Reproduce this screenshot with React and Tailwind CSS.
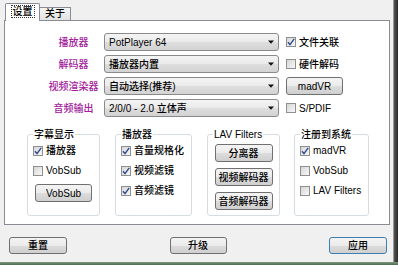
import React from 'react';

// Win7 style "PotPlayer" settings dialog

const FONT = "font-['Liberation_Sans','Noto_Sans_CJK_SC',sans-serif]";

function Check({ checked }) {
  return (
    <span className="w-[10px] h-[10px] shrink-0 border border-[#8f8f8f] bg-[linear-gradient(135deg,#d6d6d6,#f8f8f8)] flex items-center justify-center">
      {checked && (
        <svg width="8" height="8" viewBox="0 0 8 8">
          <path d="M1 4.2 L3 6.6 L7.2 0.8" fill="none" stroke="#2d4a8f" strokeWidth="1.4" />
        </svg>
      )}
    </span>
  );
}

function CheckRow({ checked, children }) {
  return (
    <div className="flex items-center gap-[3px] h-[13px] leading-[13px]">
      <Check checked={checked} />
      <span>{children}</span>
    </div>
  );
}

function Btn({ children, w = 'w-[58px]', h = 'h-[18px]', primary = false }) {
  return (
    <div
      className={`${w} ${h} shrink-0 rounded-[3px] border ${
        primary ? 'border-[#3c7fb1]' : 'border-[#707070]'
      } bg-[linear-gradient(#f4f4f4,#ebebeb_50%,#dddddd_50%,#cfcfcf)] flex items-center justify-center`}
    >
      {children}
    </div>
  );
}

function Select({ children }) {
  return (
    <div className="w-[175px] h-[18px] shrink-0 rounded-[3px] border border-[#8a8a8a] bg-[linear-gradient(#f4f4f4,#eaeaea_50%,#dedede_50%,#d2d2d2)] flex items-center pl-[4px] pr-[4px]">
      <span className="flex-1">{children}</span>
      <svg width="6" height="4" viewBox="0 0 6 4">
        <path d="M0 0.5h6L3 3.8z" fill="#111" />
      </svg>
    </div>
  );
}

function Row({ label, value, children }) {
  return (
    <div className="flex items-center h-[18px]">
      <div className="ml-[38px] w-[61px] shrink-0 text-center text-[#a3209b]">{label}</div>
      <Select>{value}</Select>
      <div className="ml-[7px] flex items-center">{children}</div>
    </div>
  );
}

function Group({ title, w, children, gap = 'gap-[7px]' }) {
  return (
    <fieldset className={`${w} h-[88px] shrink-0 border border-[#d5dde3] rounded-[3px] px-[5px] pt-[3px] flex flex-col ${gap}`}>
      <legend className="px-[1px] leading-[13px]">{title}</legend>
      {children}
    </fieldset>
  );
}

export default function App() {
  return (
    <div className={`w-[398px] h-[265px] flex flex-col bg-[#f0f0f0] text-[10px] font-medium text-black ${FONT}`}>
      <div className="flex flex-1">
        <div className="flex-1 flex flex-col pl-[4px] pt-[3px]">
          {/* tabs */}
          <div className="flex items-end pl-[1px] h-[17px]">
            <div className="relative z-10 -mb-px h-[18px] w-[35px] bg-white border border-b-0 border-[#898c95] rounded-t-[2px] flex justify-center pt-[1px]">
              <span className="h-[13px] border border-dotted border-[#333] px-[1px] leading-[11px]">设置</span>
            </div>
            <div className="h-[13px] w-[31px] border border-b-0 border-l-0 border-[#898c95] bg-[linear-gradient(#f4f4f4,#e2e2e2)] flex items-center justify-center leading-[12px]">
              关于
            </div>
          </div>

          {/* panel */}
          <div className="h-[205px] w-[386px] border border-[#898c95] bg-white pt-[12px] flex flex-col">
            <div className="flex flex-col gap-[4px]">
              <Row label="播放器" value="PotPlayer 64">
                <CheckRow checked>文件关联</CheckRow>
              </Row>
              <Row label="解码器" value="播放器内置">
                <CheckRow>硬件解码</CheckRow>
              </Row>
              <Row label="视频渲染器" value="自动选择(推荐)">
                <Btn w="w-[57px]">madVR</Btn>
              </Row>
              <Row label="音频输出" value="2/0/0 - 2.0 立体声">
                <CheckRow>S/PDIF</CheckRow>
              </Row>
            </div>

            <div className="flex mt-[11px] ml-[22px]">
              <Group title="字幕显示" w="w-[73px]">
                <CheckRow checked>播放器</CheckRow>
                <CheckRow>VobSub</CheckRow>
                <div className="flex justify-center">
                  <Btn w="w-[57px]">VobSub</Btn>
                </div>
              </Group>
              <div className="w-[15px]" />
              <Group title="播放器" w="w-[77px]">
                <CheckRow checked>音量规格化</CheckRow>
                <CheckRow checked>视频滤镜</CheckRow>
                <CheckRow checked>音频滤镜</CheckRow>
              </Group>
              <div className="w-[15px]" />
              <Group title="LAV Filters" w="w-[73px]" gap="gap-[6px]">
                <div className="flex flex-col items-center gap-[6px]">
                  <Btn>分离器</Btn>
                  <Btn>视频解码器</Btn>
                  <Btn>音频解码器</Btn>
                </div>
              </Group>
              <div className="w-[14px]" />
              <Group title="注册到系统" w="w-[75px]">
                <CheckRow checked>madVR</CheckRow>
                <CheckRow>VobSub</CheckRow>
                <CheckRow>LAV Filters</CheckRow>
              </Group>
            </div>
          </div>

          {/* bottom buttons */}
          <div className="mt-[12px] flex justify-between pl-[5px] pr-[6px]">
            <Btn h="h-[17px]">重置</Btn>
            <Btn w="w-[57px]" h="h-[17px]">升级</Btn>
            <Btn h="h-[17px]" primary>应用</Btn>
          </div>
        </div>
        <div className="w-[5px] border-l border-[#9a9a9a] bg-[linear-gradient(90deg,#555,#2a2a2a)]" />
      </div>
      <div className="h-[3px] bg-[linear-gradient(#7d977f,#4e6a52)]" />
    </div>
  );
}
